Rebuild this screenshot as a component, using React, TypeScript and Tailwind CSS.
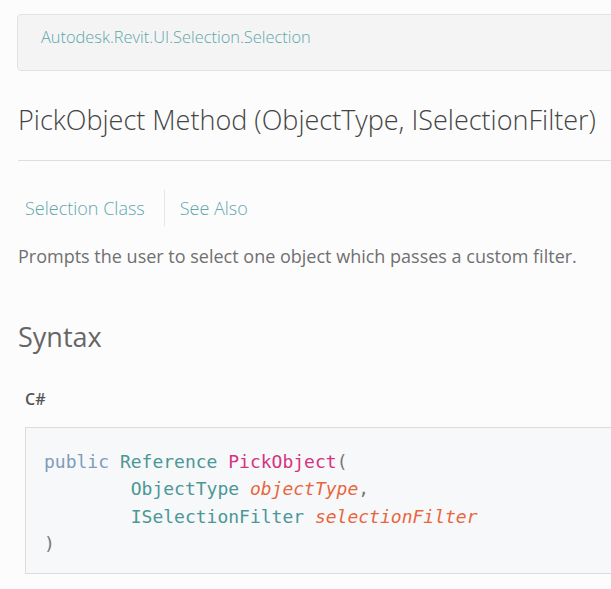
export default function App() {
  return (
    <div
      className="min-h-[589px] w-[611px] overflow-hidden bg-[#fcfcfd] text-[#666]"
      style={{ fontFamily: '"Open Sans", "Noto Sans", sans-serif' }}
    >
      <div className="pl-[17px] pt-[14px]">
        {/* Breadcrumb */}
        <div className="-mr-[20px] h-[57px] rounded-[4px] border border-[#e2e2e2] bg-[#f4f4f4] pt-[10px] pl-[23px]">
          <a className="whitespace-nowrap text-[16.4px] leading-[22px] font-light text-[#5ea7ab]">Autodesk.Revit.UI.Selection.Selection</a>
        </div>

        {/* Title */}
        <h1 className="mt-[29px] whitespace-nowrap pl-px text-[27px] leading-[40px] font-light text-[#444]">
          PickObject Method (ObjectType, ISelectionFilter)
        </h1>
        <div className="mt-[20px] ml-px h-px bg-[#dedede]" />

        {/* Links */}
        <div className="mt-[29px] flex items-center pl-[8px]">
          <a className="pr-[19px] text-[18px] font-light text-[#5ea7ab]">Selection Class</a>
          <div className="h-[36px] w-px bg-[#e6e6e6]" />
          <a className="pl-[15px] text-[18px] font-light text-[#5ea7ab]">See Also</a>
        </div>

        <p className="mt-[17px] whitespace-nowrap pl-px text-[18px] leading-[26px] text-[#707070]">
          Prompts the user to select one object which passes a custom filter.
        </p>

        <h2 className="mt-[48px] pl-px text-[27px] leading-[40px] text-[#666]">Syntax</h2>

        <div className="mt-[30px] pl-[8px] text-[16px] font-semibold text-[#555]">C#</div>

        {/* Code */}
        <div className="mt-[16px] ml-[8px] -mr-[20px] h-[147px] border border-[#dcdcdc] bg-[#f7f8fa] pt-[20px] pl-[18px]">
          <pre
            className="text-[18px] leading-[27.3px] text-[#777]"
            style={{ fontFamily: '"DejaVu Sans Mono", "Liberation Mono", monospace' }}
          >
            <span className="text-[#7c9dbb]">public</span>{" "}
            <span className="text-[#4a9796]">Reference</span>{" "}
            <span className="text-[#d6337f]">PickObject</span>(
            {"\n        "}
            <span className="text-[#4a9796]">ObjectType</span>{" "}
            <span className="italic text-[#e8663c]">objectType</span>,
            {"\n        "}
            <span className="text-[#4a9796]">ISelectionFilter</span>{" "}
            <span className="italic text-[#e8663c]">selectionFilter</span>
            {"\n"})
          </pre>
        </div>
      </div>
    </div>
  );
}
